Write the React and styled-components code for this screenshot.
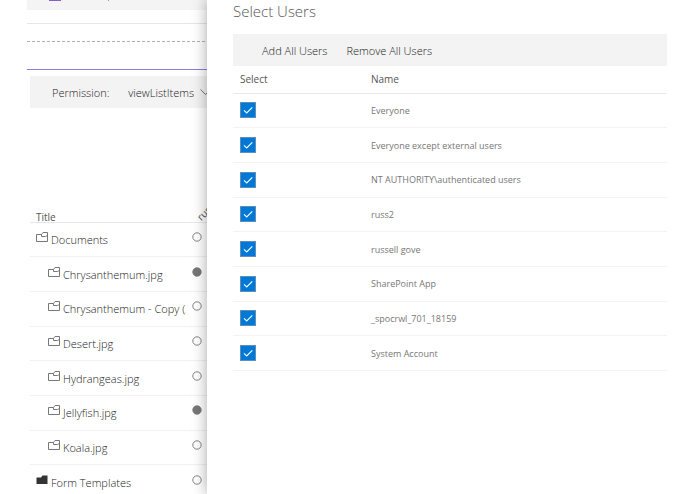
import React, { useState } from "react";
import styled, { createGlobalStyle } from "styled-components";

//Data
const users = [
  "Everyone",
  "Everyone except external users",
  "NT AUTHORITY\\authenticated users",
  "russ2",
  "russell gove",
  "SharePoint App",
  "_spocrwl_701_18159",
  "System Account",
];

const items = [
  { title: "Documents", level: 0, granted: false },
  { title: "Chrysanthemum.jpg", level: 1, granted: true },
  { title: "Chrysanthemum - Copy (2).jpg", level: 1, granted: false },
  { title: "Desert.jpg", level: 1, granted: false },
  { title: "Hydrangeas.jpg", level: 1, granted: false },
  { title: "Jellyfish.jpg", level: 1, granted: true },
  { title: "Koala.jpg", level: 1, granted: false },
  { title: "Form Templates", level: 0, closed: true, granted: false },
];

const GlobalStyle = createGlobalStyle`
  * {
    box-sizing: border-box;
  }
  body {
    margin: 0;
    background-color: #fff;
    color: #222;
    font-family: "Open Sans", "Noto Sans", sans-serif;
    font-size: 11px;
    font-weight: 300;
  }
`;

const Page = styled.div`
  position: relative;
  min-height: 100vh;
  overflow: hidden;
`;

const Workbench = styled.main`
  height: 100vh;
  padding-left: 27px;
  overflow: hidden;
`;

const CommandBar = styled.div`
  display: flex;
  align-items: flex-start;
  gap: 47px;
  height: 10px;
  padding-left: 22px;
  background-color: #f4f4f4;
`;

const CommandMark = styled.div`
  width: ${(props) => props.$width}px;
  height: 1px;
  background-color: ${(props) => props.$color};
`;

const Divider = styled.hr`
  margin: ${(props) => props.$gap}px 0 0;
  border: none;
  border-top: 1px ${(props) => props.$line || "solid"} ${(props) => props.$color};
`;

const WebPart = styled.section`
  padding: 6px 0 0 3px;
`;

const Toolbar = styled.div`
  display: flex;
  align-items: center;
  gap: 19px;
  height: 32px;
  padding-left: ${(props) => props.$indent}px;
  background-color: #f3f3f3;
`;

const PermissionSelect = styled.div`
  display: flex;
  align-items: center;
  gap: 6px;
  select {
    appearance: none;
    padding: 0;
    border: none;
    outline: none;
    background: none;
    color: inherit;
    font: inherit;
  }
`;

const TreeTable = styled.table`
  width: 100%;
  height: 392px;
  border-collapse: collapse;
  table-layout: fixed;
  th,
  td {
    padding: 0;
    text-align: left;
  }
  thead tr {
    height: 114px;
    border-bottom: 1px solid #e6e9ec;
  }
  tbody tr {
    border-bottom: 1px solid #f1f1f1;
  }
  th {
    vertical-align: bottom;
    color: #555;
    font-size: 10px;
    font-weight: 400;
    line-height: 10px;
  }
`;

const TitleHead = styled.th`
  width: 156px;
`;

const TitleText = styled.span`
  padding-left: 6px;
`;

const Slanted = styled.span`
  display: inline-block;
  margin-left: 16px;
  transform: rotate(-45deg);
  transform-origin: left bottom;
`;

const ItemName = styled.div`
  display: flex;
  align-items: center;
  gap: 3px;
  padding-left: ${(props) => 6 + props.$level * 12}px;
  overflow: hidden;
  white-space: nowrap;
  svg {
    flex: none;
    margin-bottom: 5px;
  }
`;

const Dot = styled.svg`
  display: block;
  margin: 0 0 5px 6px;
`;

const Panel = styled.aside`
  position: absolute;
  top: 0;
  right: 0;
  bottom: 0;
  left: 207px;
  padding: 0 28px 0 26px;
  background-color: #fff;
  box-shadow: 0 0 14px rgba(0, 0, 0, 0.35);
`;

const PanelTitle = styled.h1`
  margin: 0;
  padding-bottom: 12px;
  color: #555;
  font-size: 15px;
  font-weight: 300;
  line-height: 22px;
`;

const ToolbarButton = styled.button`
  padding: 0;
  border: none;
  background: none;
  color: #222;
  font: inherit;
`;

const UserTable = styled.table`
  width: 100%;
  height: 305px;
  border-collapse: collapse;
  table-layout: fixed;
  font-weight: 400;
  th,
  td {
    padding: 0 0 0 7px;
    text-align: left;
  }
  thead tr {
    height: 27px;
    border-bottom: 1px solid #eaeaea;
  }
  tbody tr {
    border-bottom: 1px solid #f3f3f3;
  }
  th {
    color: #555;
    font-size: 10px;
    font-weight: 400;
  }
  td {
    color: #777;
    font-size: 9px;
  }
`;

const SelectHead = styled.th`
  width: 131px;
`;

const CheckBox = styled.label`
  display: grid;
  width: 16px;
  height: 16px;
  input,
  svg {
    grid-area: 1 / 1;
    width: 16px;
    height: 16px;
    margin: 0;
  }
  input {
    appearance: none;
    border: 1px solid #5f8fb8;
    background-color: #fff;
  }
  input:checked {
    background-color: #0078d7;
  }
  svg {
    pointer-events: none;
  }
`;

function FolderIcon({ closed }) {
  return (
    <svg width="12" height="10" viewBox="0 0 12 10" fill="none">
      {closed ? (
        <path d="M0.5 2.5H5L6.5 0.5H11.5V9H0.5Z" fill="#333" />
      ) : (
        <path
          d="M5.5 2.5H0.5V9.5H11.5V0.5H7L5.5 2.5V4.5H9.5L11.5 3.5"
          stroke="#777"
        />
      )}
    </svg>
  );
}

function PermissionDot({ granted }) {
  return (
    <Dot width="10" height="10" viewBox="0 0 10 10">
      <circle
        cx="5"
        cy="5"
        r="4.2"
        stroke="#777"
        strokeWidth="0.9"
        fill={granted ? "#777" : "none"}
      />
    </Dot>
  );
}

function UserRow({ name }) {
  const [checked, setChecked] = useState(true);

  return (
    <tr>
      <td>
        <CheckBox>
          <input
            type="checkbox"
            aria-label={name}
            checked={checked}
            onChange={(e) => setChecked(e.target.checked)}
          />
          {checked && (
            <svg viewBox="0 0 16 16" fill="none">
              <path d="M4 8.3L6.7 11L12.3 5.3" stroke="#fff" strokeWidth="1.1" />
            </svg>
          )}
        </CheckBox>
      </td>
      <td>{name}</td>
    </tr>
  );
}

function App() {
  return (
    <Page>
      <GlobalStyle />
      <Workbench>
        <CommandBar>
          <CommandMark $width={12} $color="#8661c5" />
          <CommandMark $width={1} $color="#999" />
        </CommandBar>
        <Divider $gap={13} $color="#e6e6e6" />
        <Divider $gap={17} $line="dashed" $color="#b0b0b0" />
        <Divider $gap={27} $color="#8a7fe0" />
        <WebPart>
          <Toolbar $indent={22}>
            <label htmlFor="permission">Permission:</label>
            <PermissionSelect>
              <select id="permission" defaultValue="viewListItems">
                <option>viewListItems</option>
              </select>
              <svg width="11" height="8" viewBox="0 0 11 8" fill="none">
                <path d="M0.5 1.5L5.5 6.5L10.5 1.5" stroke="#777" />
              </svg>
            </PermissionSelect>
          </Toolbar>
          <TreeTable>
            <thead>
              <tr>
                <TitleHead>
                  <TitleText>Title</TitleText>
                </TitleHead>
                <th>
                  <Slanted>russ2</Slanted>
                </th>
              </tr>
            </thead>
            <tbody>
              {items.map((item) => (
                <tr key={item.title}>
                  <td>
                    <ItemName $level={item.level}>
                      <FolderIcon closed={item.closed} />
                      {item.title}
                    </ItemName>
                  </td>
                  <td>
                    <PermissionDot granted={item.granted} />
                  </td>
                </tr>
              ))}
            </tbody>
          </TreeTable>
        </WebPart>
      </Workbench>
      <Panel>
        <PanelTitle>Select Users</PanelTitle>
        <Toolbar $indent={29}>
          <ToolbarButton type="button">Add All Users</ToolbarButton>
          <ToolbarButton type="button">Remove All Users</ToolbarButton>
        </Toolbar>
        <UserTable>
          <thead>
            <tr>
              <SelectHead>Select</SelectHead>
              <th>Name</th>
            </tr>
          </thead>
          <tbody>
            {users.map((name) => (
              <UserRow key={name} name={name} />
            ))}
          </tbody>
        </UserTable>
      </Panel>
    </Page>
  );
}

export default App;
